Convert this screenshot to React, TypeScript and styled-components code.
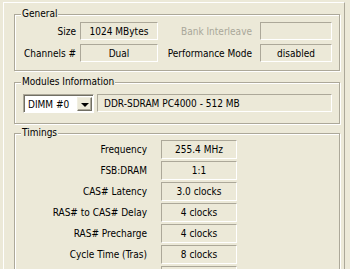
import React from "react";
import styled, { createGlobalStyle } from "styled-components";

const GlobalStyle = createGlobalStyle`
  html, body {
    margin: 0;
    padding: 0;
    background: #ece9d8;
    overflow: hidden;
  }
  body {
    font-family: "DejaVu Sans Condensed", "Liberation Sans", sans-serif;
    font-size: 10px;
    color: #000;
  }
`;

const Page = styled.div`
  width: 350px;
  height: 269px;
  overflow: hidden;
`;

const TabPage = styled.div`
  margin-left: 3px;
  margin-top: 2px;
  width: 342px;
  height: 300px;
  border-top: 1px solid #fff;
  border-left: 1px solid #fff;
  border-right: 1px solid #aca899;
  padding: 11px 6px 0 10px;
  box-sizing: border-box;
  display: flex;
  flex-direction: column;
`;

const Group = styled.div<{ $gap: number; $pt: number; $pb: number }>`
  position: relative;
  width: 326px;
  box-sizing: border-box;
  margin-top: ${(p) => p.$gap}px;
  padding: ${(p) => p.$pt}px 0 ${(p) => p.$pb}px 0;
  border: 1px solid #aca899;
  box-shadow: 1px 1px 0 #fff, inset 1px 1px 0 #fff;
`;

const Title = styled.span`
  position: absolute;
  top: -7px;
  left: 6px;
  padding: 0 1px;
  line-height: 12px;
  background: #ece9d8;
`;

const GeneralGrid = styled.div`
  display: grid;
  grid-template-columns: 65px 78px 102px 72px;
  grid-auto-rows: 18px;
  row-gap: 4px;
`;

const Label = styled.div<{ $pad: number; $disabled?: boolean }>`
  display: flex;
  align-items: center;
  justify-content: flex-end;
  padding-right: ${(p) => p.$pad}px;
  white-space: nowrap;
  color: ${(p) => (p.$disabled ? "#a9a799" : "#000")};
`;

const Field = styled.div<{ $align?: "left" | "center" }>`
  box-sizing: border-box;
  height: 100%;
  border: 1px solid;
  border-color: #aca899 #fff #fff #aca899;
  display: flex;
  align-items: center;
  justify-content: ${(p) => (p.$align === "left" ? "flex-start" : "center")};
  padding: 0 ${(p) => (p.$align === "left" ? "6px" : "0")};
  white-space: nowrap;
`;

const ModulesRow = styled.div`
  display: flex;
  gap: 3px;
  padding-left: 8px;
  height: 18px;
`;

const Combo = styled.div`
  box-sizing: border-box;
  width: 71px;
  height: 19px;
  background: #fff;
  border: 1px solid;
  border-color: #aca899 #fff #fff #aca899;
  box-shadow: inset 1px 1px 0 #716f64;
  display: flex;
  align-items: stretch;
  padding: 2px 1px 1px 2px;
`;

const ComboText = styled.div`
  flex: 1;
  display: flex;
  align-items: center;
  padding-left: 2px;
`;

const ComboButton = styled.div`
  box-sizing: border-box;
  width: 15px;
  background: #ece9d8;
  border: 1px solid;
  border-color: #f1efe2 #716f64 #716f64 #f1efe2;
  box-shadow: inset -1px -1px 0 #aca899;
  display: flex;
  align-items: center;
  justify-content: center;
`;

const Arrow = styled.div`
  width: 0;
  height: 0;
  border-left: 4px solid transparent;
  border-right: 4px solid transparent;
  border-top: 4px solid #000;
  margin-top: 1px;
`;

const WideField = styled(Field)`
  width: 235px;
  height: 18px;
`;

const TimingsGrid = styled.div`
  display: grid;
  grid-template-columns: 146px 76px;
  grid-auto-rows: 19px;
  row-gap: 2px;
`;

const timings: [string, string, boolean?][] = [
  ["Frequency", "255.4 MHz"],
  ["FSB:DRAM", "1:1"],
  ["CAS# Latency", "3.0 clocks"],
  ["RAS# to CAS# Delay", "4 clocks"],
  ["RAS# Precharge", "4 clocks"],
  ["Cycle Time (Tras)", "8 clocks"],
  ["Bank Cycle Time (Trc)", "", true],
  ["Command Rate", "", true],
];

export default function App() {
  return (
    <Page>
      <GlobalStyle />
      <TabPage>
        <Group $gap={0} $pt={7} $pb={8}>
          <Title>General</Title>
          <GeneralGrid>
            <Label $pad={4}>Size</Label>
            <Field>1024 MBytes</Field>
            <Label $pad={8} $disabled>
              Bank Interleave
            </Label>
            <Field />
            <Label $pad={4}>Channels #</Label>
            <Field>Dual</Field>
            <Label $pad={8}>Performance Mode</Label>
            <Field>disabled</Field>
          </GeneralGrid>
        </Group>

        <Group $gap={11} $pt={11} $pb={11}>
          <Title>Modules Information</Title>
          <ModulesRow>
            <Combo>
              <ComboText>DIMM #0</ComboText>
              <ComboButton>
                <Arrow />
              </ComboButton>
            </Combo>
            <WideField $align="left">DDR-SDRAM PC4000 - 512 MB</WideField>
          </ModulesRow>
        </Group>

        <Group $gap={9} $pt={6} $pb={8}>
          <Title>Timings</Title>
          <TimingsGrid>
            {timings.map(([name, value, disabled]) => (
              <React.Fragment key={name}>
                <Label $pad={14} $disabled={disabled}>
                  {name}
                </Label>
                <Field>{value}</Field>
              </React.Fragment>
            ))}
          </TimingsGrid>
        </Group>
      </TabPage>
    </Page>
  );
}
